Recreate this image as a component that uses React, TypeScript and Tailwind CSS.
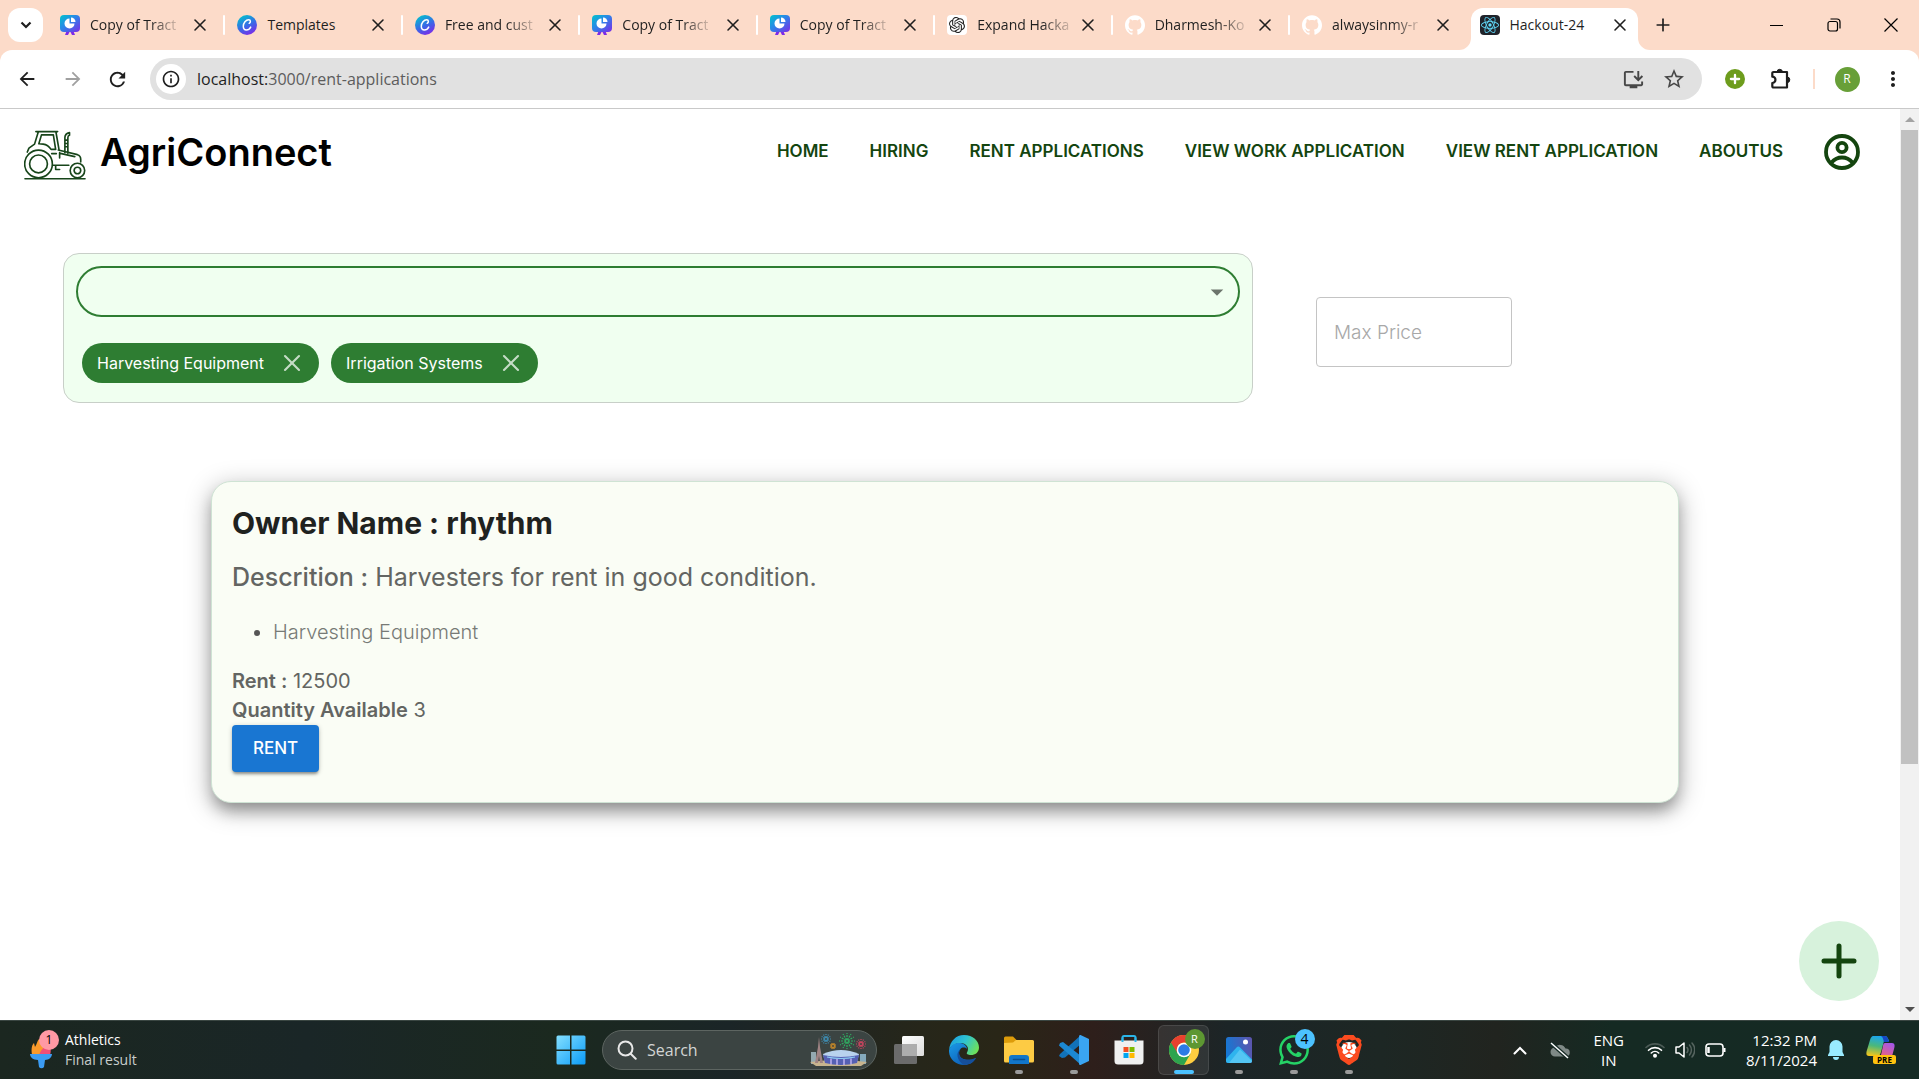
import type { ReactNode } from "react";
import { SiBrave, SiGithub, SiOpenai, SiReact, SiWhatsapp } from "react-icons/si";
import {
  MdArrowBack,
  MdArrowDropDown,
  MdArrowForward,
  MdInfoOutline,
  MdMoreVert,
  MdOutlineInstallDesktop,
  MdRefresh,
  MdStarOutline,
} from "react-icons/md";
import { Plus, X } from "lucide-react";

/* ---------- Favicons ---------- */

function PresentationIcon() {
  return (
    <svg viewBox="0 0 20 20" className="size-5">
      <defs>
        <linearGradient id="presentation" x1="0" y1="0" x2="1" y2="1">
          <stop offset="0" stopColor="#00c4cc" />
          <stop offset="0.45" stopColor="#2b86e8" />
          <stop offset="1" stopColor="#7d2ae8" />
        </linearGradient>
      </defs>
      <path d="M5 20l2-5h6l2 5h-3l-2-4-2 4z" fill="#7d2ae8" />
      <rect width="20" height="17" rx="4" fill="url(#presentation)" />
      <path d="M9.500 3.500a5 5 0 1 0 5 5h-5z" fill="#fff" />
      <path d="M11 2.500a4.500 4.500 0 0 1 4.500 4.500H11z" fill="#fff" />
    </svg>
  );
}

function CanvaIcon() {
  return (
    <svg viewBox="0 0 20 20" className="size-5">
      <defs>
        <linearGradient id="canva" x1="0.2" y1="0" x2="0.7" y2="1">
          <stop offset="0" stopColor="#00c4cc" />
          <stop offset="0.55" stopColor="#3969e7" />
          <stop offset="1" stopColor="#7d2ae8" />
        </linearGradient>
      </defs>
      <circle cx="10" cy="10" r="10" fill="url(#canva)" />
      <path
        d="M12.200 8.300c1.600-.8 1.700-3.600-.5-3.600C8.900 4.700 6.300 8 6.300 11.300c0 2.300 1.300 3.700 3.100 3.700 1.900 0 3.400-1.200 4.300-2.900"
        fill="none"
        stroke="#fff"
        strokeWidth="1.500"
        strokeLinecap="round"
      />
    </svg>
  );
}

function OpenAiIcon() {
  return (
    <span className="flex size-5 items-center justify-center rounded bg-white text-[#222]">
      <SiOpenai size={16} />
    </span>
  );
}

function GithubIcon() {
  return <SiGithub size={20} className="text-white" />;
}

function ReactIcon() {
  return (
    <span className="flex size-5 items-center justify-center rounded bg-[#20232a] text-[#61dafb]">
      <SiReact size={18} />
    </span>
  );
}

/* ---------- Browser chrome ---------- */

const tabs: { title: string; icon: ReactNode }[] = [
  { title: "Copy of Tract", icon: <PresentationIcon /> },
  { title: "Templates", icon: <CanvaIcon /> },
  { title: "Free and cust", icon: <CanvaIcon /> },
  { title: "Copy of Tract", icon: <PresentationIcon /> },
  { title: "Copy of Tract", icon: <PresentationIcon /> },
  { title: "Expand Hacka", icon: <OpenAiIcon /> },
  { title: "Dharmesh-Ko", icon: <GithubIcon /> },
  { title: "alwaysinmy-r", icon: <GithubIcon /> },
  { title: "Hackout-24", icon: <ReactIcon /> },
];

function Tab({ title, icon, active, last }: { title: string; icon: ReactNode; active: boolean; last: boolean }) {
  return (
    <div className="relative flex min-w-0 flex-1 items-stretch pt-2">
      {active && (
        <>
          <svg viewBox="0 0 12 12" className="absolute bottom-0 -left-3 size-3" fill="#fff">
            <path d="M12 0v12H0A12 12 0 0 0 12 0z" />
          </svg>
          <svg viewBox="0 0 12 12" className="absolute right-[-2px] bottom-0 size-3" fill="#fff">
            <path d="M0 0v12h12A12 12 0 0 1 0 0z" />
          </svg>
        </>
      )}
      <div
        className={
          active
            ? "mr-[10px] flex min-w-0 flex-1 items-center rounded-t-xl bg-white pr-2 pb-2 pl-[9px]"
            : "mr-[10px] flex min-w-0 flex-1 items-center pr-2 pb-2 pl-[9px]"
        }
      >
        <button type="button" className="flex min-w-0 flex-1 items-center gap-[10px] text-left">
          <span className="shrink-0">{icon}</span>
          <span
            className={
              active || title === "Templates"
                ? "text-sm whitespace-nowrap"
                : "text-sm whitespace-nowrap [mask-image:linear-gradient(to_right,black_70%,#0003)]"
            }
          >
            {title}
          </span>
        </button>
        <button type="button" aria-label={`Close ${title}`} className="shrink-0">
          <X size={20} strokeWidth={1.9} />
        </button>
      </div>
      {!active && !last && <span className="absolute top-[15px] right-[3px] h-5 w-0.5 rounded bg-white" />}
    </div>
  );
}

function TabStrip() {
  return (
    <div className="flex h-[50px] bg-[#fcdbc9]">
      <div className="w-[51px] pt-2 pl-2">
        <button
          type="button"
          aria-label="Search tabs"
          className="flex h-[34px] w-[35px] items-center justify-center rounded-xl bg-white"
        >
          <svg viewBox="0 0 12 8" className="h-2 w-3" fill="none" stroke="#1f1f1f" strokeWidth="2.200">
            <path d="M1.500 1.500L6 6l4.500-4.500" />
          </svg>
        </button>
      </div>
      <div className="flex min-w-0 flex-1">
        {tabs.map((tab, i) => (
          <Tab key={i} {...tab} active={i === tabs.length - 1} last={i === tabs.length - 2} />
        ))}
      </div>
      <div className="flex w-[271px] items-stretch justify-between">
        <button type="button" aria-label="New tab" className="flex w-[30px] items-center justify-center">
          <Plus size={20} strokeWidth={2} />
        </button>
        <div className="flex">
          <button type="button" aria-label="Minimize" className="flex w-[57px] items-center justify-center">
            <span className="h-px w-[13px] bg-black" />
          </button>
          <button type="button" aria-label="Restore" className="flex w-[57px] items-center justify-center">
            <svg viewBox="0 0 14 14" className="size-[14px]" fill="none" stroke="#000" strokeWidth="1.200">
              <rect x="1" y="3.500" width="9.500" height="9.500" rx="2" />
              <path d="M3.500 1h6.500a3 3 0 0 1 3 3v6.500" />
            </svg>
          </button>
          <button type="button" aria-label="Close window" className="flex w-[57px] items-center justify-center">
            <svg viewBox="0 0 14 14" className="size-[14px]" stroke="#000" strokeWidth="1.200">
              <path d="M.5.5l13 13M13.500.5l-13 13" />
            </svg>
          </button>
        </div>
      </div>
    </div>
  );
}

function Toolbar() {
  return (
    <div className="bg-[#fcdbc9]">
      <div className="flex h-[59px] items-center rounded-t-xl border-b border-[#c9c9c9] bg-white pr-[3px] pl-1 text-[#1f1f1f]">
        <button type="button" aria-label="Back" className="flex w-[46px] justify-center">
          <MdArrowBack size={22} />
        </button>
        <button type="button" aria-label="Forward" className="flex w-[45px] justify-center text-[#a0a0a0]">
          <MdArrowForward size={22} />
        </button>
        <button type="button" aria-label="Reload" className="flex w-[45px] justify-center">
          <MdRefresh size={23} />
        </button>
        <div className="mr-[10px] ml-[10px] flex h-[42px] flex-1 items-center rounded-full bg-[#e1e1e1] pr-4 pl-[6px]">
          <button
            type="button"
            aria-label="Site information"
            className="flex size-[30px] items-center justify-center rounded-full bg-white"
          >
            <MdInfoOutline size={20} />
          </button>
          <a href="#address" className="ml-[11px] flex-1 text-[16px] leading-5 text-[#5c5c5c]">
            <span className="text-[#1f1f1f]">localhost:</span>3000/rent-applications
          </a>
          <button type="button" aria-label="Install app" className="mr-[17px] text-[#474747]">
            <MdOutlineInstallDesktop size={23} />
          </button>
          <button type="button" aria-label="Bookmark this page" className="text-[#474747]">
            <MdStarOutline size={24} />
          </button>
        </div>
        <button type="button" aria-label="Add extension" className="flex w-[46px] justify-center">
          <span className="flex size-5 items-center justify-center rounded-full bg-[#6d9c1c] text-white">
            <Plus size={14} strokeWidth={4} />
          </span>
        </button>
        <button type="button" aria-label="Extensions" className="flex w-[46px] justify-center">
          <svg viewBox="0 0 22 22" className="size-[22px]">
            <path
              d="M3.500 4h13.500v15.500H3.500a1.200 1.200 0 0 1-1.200-1.200V15a3 3 0 0 0 0-6.300V5.200A1.200 1.200 0 0 1 3.500 4z"
              fill="none"
              stroke="#1f1f1f"
              strokeWidth="2.200"
              strokeLinejoin="round"
            />
            <path d="M7 4a2.700 2.700 0 0 1 5.400 0zM17 9a2.800 2.800 0 0 1 0 5.600z" fill="#1f1f1f" stroke="#1f1f1f" />
          </svg>
        </button>
        <span className="mx-[9px] h-5 w-0.5 bg-[#fcdbc9]" />
        <button type="button" aria-label="Profile" className="flex w-[46px] justify-center">
          <span className="flex size-[25px] items-center justify-center rounded-full bg-[#689f38] text-[12px] text-white">
            R
          </span>
        </button>
        <button type="button" aria-label="Menu" className="flex w-[46px] justify-center">
          <MdMoreVert size={24} />
        </button>
      </div>
    </div>
  );
}

/* ---------- AgriConnect page ---------- */

function TractorLogo() {
  return (
    <svg
      viewBox="24 24 188 150"
      className="mt-[5px] h-[50px] w-[62px]"
      fill="none"
      stroke="#17451a"
      strokeWidth="5"
      strokeLinecap="round"
      strokeLinejoin="round"
    >
      <path d="M60 28h66M67 30L56 66l-17 12-5 12M121 30l9 52M77 38h36l7 44h-14q-9-14-24-16l-13-1z" />
      <path d="M148 92V46q0-12 14-15v8q-5 1-5 8v47M148 54h9M148 64h9M148 74h9" />
      <path d="M108 95h14M128 84l58 14q10 3 10 14v8M134 94l44 10M132 92v16M112 130h48M120 131v12h12" />
      <circle cx="68" cy="126" r="42" />
      <circle cx="68" cy="126" r="27" />
      <circle cx="186" cy="146" r="22" />
      <circle cx="186" cy="146" r="10" />
      <path d="M27 171h182" />
    </svg>
  );
}

const navItems = ["HOME", "HIRING", "RENT APPLICATIONS", "VIEW WORK APPLICATION", "VIEW RENT APPLICATION", "ABOUTUS"];

function SiteHeader() {
  return (
    <header className="flex h-[86px] items-center justify-between pr-10 pl-6">
      <a href="#home" className="flex items-center gap-[14px]">
        <TractorLogo />
        <span className="text-[38px] leading-[50px] font-semibold text-black">AgriConnect</span>
      </a>
      <nav className="flex items-center gap-[41px] text-[17px] font-semibold text-[#14450f]">
        {navItems.map((item) => (
          <a key={item} href={`#${item.toLowerCase().replaceAll(" ", "-")}`}>
            {item}
          </a>
        ))}
        <button type="button" aria-label="Account">
          <svg viewBox="0 0 36 36" className="size-9" fill="none" stroke="currentColor" strokeWidth="3.800">
            <circle cx="18" cy="18" r="16" />
            <circle cx="18" cy="13.500" r="4.600" />
            <path d="M7.500 28.500c3-3.500 6.500-5 10.500-5s7.500 1.500 10.500 5" />
          </svg>
        </button>
      </nav>
    </header>
  );
}

function FilterChip({ label }: { label: string }) {
  return (
    <li className="flex h-10 items-center rounded-full bg-[#2e7d32] pr-[13px] pl-[15px] text-base text-white">
      {label}
      <button type="button" aria-label={`Remove ${label}`} className="ml-[14px] text-[#c5dcc6]">
        <X size={28} strokeWidth={1.8} />
      </button>
    </li>
  );
}

function Filters() {
  return (
    <section className="mt-[58px] grid grid-cols-[1190fr_521fr] items-center gap-[63px] px-[63px]">
      <div className="rounded-2xl border border-[#c8cfc8] bg-[#f0fff0] px-3 pt-3 pb-[19px]">
        <div className="relative flex items-center">
          <select
            aria-label="Equipment type"
            className="h-[51px] w-full appearance-none rounded-full border-2 border-[#2e7d32] bg-transparent"
          />
          <MdArrowDropDown size={30} className="pointer-events-none absolute right-2 text-[#6c756c]" />
        </div>
        <ul className="mt-[26px] flex gap-3 pl-[6px]">
          <FilterChip label="Harvesting Equipment" />
          <FilterChip label="Irrigation Systems" />
        </ul>
      </div>
      <input
        type="text"
        aria-label="Max Price"
        placeholder="Max Price"
        className="mt-2 h-[70px] w-[196px] rounded border border-[#c4c4c4] px-[17px] text-[19px] font-light placeholder:text-[#a8a8a8]"
      />
    </section>
  );
}

function RentCard() {
  return (
    <article className="mt-[78px] mr-[221px] ml-[211px] rounded-[20px] border border-[#cfe3d4] bg-[#fafdf5] px-5 pt-5 pb-[30px] text-xl leading-[29px] text-[#636562] shadow-[0_10px_15px_-3px_rgba(0,0,0,0.3),0_6px_24px_2px_rgba(0,0,0,0.25)]">
      <h2 className="text-[30px] leading-[42px] font-bold text-[#1f221f]">Owner Name : rhythm</h2>
      <p className="mt-[15px] text-[25px] leading-9">
        <b className="font-medium">Descrition :</b> Harvesters for rent in good condition.
      </p>
      <ul className="mt-[22px] list-disc pl-[41px] leading-[30px] font-light text-[#777a76] marker:text-[#555]">
        <li>Harvesting Equipment</li>
      </ul>
      <p className="mt-5">
        <b className="font-semibold">Rent :</b> 12500
      </p>
      <p>
        <b className="font-semibold">Quantity Available</b> 3
      </p>
      <button
        type="button"
        className="block h-[47px] rounded bg-[#1976d2] px-[21px] text-[17px] font-medium text-white shadow-[0_3px_3px_-1px_rgba(0,0,0,0.35),0_1px_5px_rgba(0,0,0,0.2)]"
      >
        RENT
      </button>
    </article>
  );
}

function PageScrollbar() {
  return (
    <div aria-hidden="true" className="flex w-[19px] flex-col bg-[#f1f1f1]">
      <span className="flex h-[21px] items-center justify-center">
        <span className="border-x-[5px] border-b-[5px] border-x-transparent border-b-[#a3a3a3]" />
      </span>
      <span className="flex flex-1 flex-col px-px">
        <span className="h-[73%] bg-[#c1c1c1]" />
      </span>
      <span className="flex h-[21px] items-center justify-center">
        <span className="border-x-[5px] border-t-[5px] border-x-transparent border-t-[#505050]" />
      </span>
    </div>
  );
}

/* ---------- Taskbar ---------- */

function WindowsIcon() {
  return (
    <svg viewBox="0 0 30 30" className="size-[30px]">
      <defs>
        <linearGradient id="windows" x1="0" y1="0" x2="1" y2="1">
          <stop offset="0" stopColor="#84dfff" />
          <stop offset="1" stopColor="#0a9bf8" />
        </linearGradient>
      </defs>
      <path
        d="M2 .5h12v14H.5V2A1.500 1.500 0 0 1 2 .5zM15.500.5H28A1.500 1.500 0 0 1 29.500 2v12.500h-14zM.5 16H14v13.500H2A1.500 1.500 0 0 1 .5 28zM15.500 16h14v12a1.500 1.500 0 0 1-1.500 1.500H15.500z"
        fill="url(#windows)"
      />
    </svg>
  );
}

function Firework({ x, y, r, color }: { x: number; y: number; r: number; color: string }) {
  const rays = [0, 30, 60, 90, 120, 150, 180, 210, 240, 270, 300, 330];
  return (
    <g stroke={color} strokeWidth="1.200" strokeDasharray="2 1">
      {rays.map((a) => (
        <path key={a} d={`M${x} ${y - 1}V${y - r}`} transform={`rotate(${a} ${x} ${y})`} />
      ))}
    </g>
  );
}

function StadiumIcon() {
  return (
    <svg viewBox="0 0 58 34" className="h-[34px] w-[58px]">
      <Firework x={16} y={6} r={5} color="#3f8fb5" />
      <Firework x={37} y={8} r={8} color="#2fae62" />
      <Firework x={23} y={13} r={4} color="#c98a28" />
      <Firework x={51} y={11} r={5} color="#cf4560" />
      <path d="M1 19h5v12H1z" fill="#93a9b0" />
      <path d="M50 21h6v10h-6z" fill="#84aabd" />
      <path d="M0 29q29-4 57 0l-6 4H6z" fill="#c8b48e" />
      <path d="M13 21q18-8 36 0l-2 8q-16 4-32 0z" fill="#b9d3ee" />
      <path d="M13 22q18 4 36 0l-2 8q-16 4-32 0z" fill="#5660b4" />
      <path d="M17 24q14 3 28 0" fill="none" stroke="#8fd0f5" strokeWidth="1.200" />
      <path d="M21 25.500v6M27 26v6M34 26v6M41 25.500v6" stroke="#cbbdf7" strokeWidth="1.300" />
      <path d="M9 4l-1 10-3 16h3l1-7 1 7h3l-3-16z" fill="#a08484" />
    </svg>
  );
}

function TaskViewIcon() {
  return (
    <svg viewBox="0 0 30 28" className="h-7 w-[30px]">
      <defs>
        <linearGradient id="taskview" x1="0" y1="0" x2="1" y2="1">
          <stop offset="0" stopColor="#fff" />
          <stop offset="1" stopColor="#dcdcdc" />
        </linearGradient>
      </defs>
      <rect x="8" width="22" height="20" rx="1.500" fill="url(#taskview)" />
      <rect y="8" width="23" height="20" rx="1.500" fill="#6b6b6b" />
      <path d="M8 8h15v12H8z" fill="#adadad" />
    </svg>
  );
}

function EdgeIcon() {
  return (
    <svg viewBox="0 0 30 30" className="size-[30px]">
      <defs>
        <linearGradient id="edgeTop" x1="0" y1="0.2" x2="1" y2="0.6">
          <stop offset="0" stopColor="#1b9de2" />
          <stop offset="0.5" stopColor="#2fc4d0" />
          <stop offset="1" stopColor="#6fe05a" />
        </linearGradient>
        <linearGradient id="edgeBody" x1="0" y1="0" x2="0.8" y2="1">
          <stop offset="0" stopColor="#1a9be8" />
          <stop offset="1" stopColor="#0c56b0" />
        </linearGradient>
      </defs>
      <path d="M0 15C1 6 7 0 15 0c9 0 15 6 15 12.500 0 5-4 7.500-8 7.500-3 0-5-1-4-2.500 3-5-1-9.500-6.500-9.500C6 8 2 11 0 15z" fill="url(#edgeTop)" />
      <path d="M0 15c2-5 6-7.500 11-7 4 .5 7 3 7 6-3-3-8-1-8 4 0 6 8 9 17 5-3 5-7 7-12 7C6.500 30-.5 23.500 0 15z" fill="url(#edgeBody)" />
      <path d="M12 14c-5 5 0 15 15 9-3 5-8 7-12 7C8 26 6 17 12 14z" fill="#154f9c" />
    </svg>
  );
}

function FolderIcon() {
  return (
    <svg viewBox="0 0 30 28" className="h-7 w-[30px]">
      <path d="M0 2a1.500 1.500 0 0 1 1.500-1.500H9l4 4h15.500A1.500 1.500 0 0 1 30 6v8H0z" fill="#dd9c0a" />
      <path d="M0 7l9-.500 3-2.500h16.500A1.500 1.500 0 0 1 30 5.500V25a1.500 1.500 0 0 1-1.500 1.500h-27A1.500 1.500 0 0 1 0 25z" fill="#fdcb44" />
      <path d="M5 28v-6a3 3 0 0 1 3-3h14a3 3 0 0 1 3 3v6z" fill="#1276c9" />
      <path d="M9.500 23.500h11" stroke="#0b4f91" strokeWidth="1.600" strokeLinecap="round" />
    </svg>
  );
}

function VsCodeIcon() {
  return (
    <svg viewBox="0 0 30 30" className="size-[30px]">
      <path d="M22 0L1 19l-1 2 3 2 3-.5L22 9z" fill="#1272b9" />
      <path d="M22 30L0 10.500 1 8l3-1 18 14z" fill="#1c88d2" />
      <path d="M21.500 0L30 4v22l-8.500 4c-1 0-1.500-.5-1.500-1.500v-27C20 .5 20.500 0 21.500 0z" fill="#3aa5f2" />
    </svg>
  );
}

function StoreIcon() {
  return (
    <svg viewBox="0 0 30 30" className="size-[30px]">
      <path d="M8.500 8V2.500A1.500 1.500 0 0 1 10 1h10a1.500 1.500 0 0 1 1.500 1.500V8" fill="none" stroke="#2bb5e9" strokeWidth="2" />
      <path d="M.5 5.500h29V26a3.500 3.500 0 0 1-3.500 3.500H4A3.500 3.500 0 0 1 .5 26z" fill="#f0f0f0" />
      <path d="M8.500 2.500V7M21.500 2.500V7" stroke="#2bb5e9" strokeWidth="2" />
      <path d="M9.500 12h5v5h-5z" fill="#f25022" />
      <path d="M15.500 12h5v5h-5z" fill="#7fba00" />
      <path d="M9.500 18h5v5h-5z" fill="#00a4ef" />
      <path d="M15.500 18h5v5h-5z" fill="#ffb900" />
    </svg>
  );
}

function ChromeIcon() {
  return (
    <svg viewBox="0 0 30 30" className="size-[30px]">
      <circle cx="15" cy="15" r="15" fill="#ffcd40" />
      <path d="M2 7.500A15 15 0 0 0 15 30l6.500-11.300L15 15z" fill="#2da44e" />
      <path d="M2 7.500A15 15 0 0 1 28 7.500H15a7.500 7.500 0 0 0-6.600 10.500z" fill="#e8402f" />
      <circle cx="15" cy="15" r="7.300" fill="#fff" />
      <circle cx="15" cy="15" r="5.800" fill="#2c7be5" />
    </svg>
  );
}

function PhotosIcon() {
  return (
    <svg viewBox="0 0 26 26" className="size-[26px]">
      <defs>
        <linearGradient id="photos" x1="0" y1="0.5" x2="1" y2="0.3">
          <stop offset="0" stopColor="#1578d4" />
          <stop offset="1" stopColor="#5b55ae" />
        </linearGradient>
      </defs>
      <rect width="26" height="26" rx="2.500" fill="url(#photos)" />
      <path d="M0 22L10.500 10.500a2.500 2.500 0 0 1 3.600 0L26 22.500V24a2 2 0 0 1-2 2H2a2 2 0 0 1-2-2z" fill="#2fb4ee" />
      <path d="M3 26l11-13.500L26 24a2 2 0 0 1-2 2z" fill="#82dcfb" opacity="0.450" />
      <circle cx="19.500" cy="5" r="2.500" fill="#fff" />
    </svg>
  );
}

function BraveIcon() {
  return (
    <span className="relative flex items-center justify-center">
      <span className="absolute size-4 rounded-full bg-white" />
      <SiBrave size={30} className="relative text-[#fb4b1f]" />
    </span>
  );
}

function TaskButton({
  label,
  state,
  children,
}: {
  label: string;
  state?: "running" | "active";
  children: ReactNode;
}) {
  return (
    <button type="button" aria-label={label} className="relative flex h-full w-[55px] items-center justify-center">
      {state === "active" && (
        <span className="absolute inset-x-0.5 inset-y-1 rounded-md border border-white/10 bg-white/8" />
      )}
      <span className="relative">{children}</span>
      {state === "running" && <span className="absolute bottom-[5px] h-1 w-2 rounded-full bg-[#9a9a9a]" />}
      {state === "active" && <span className="absolute bottom-[5px] h-1 w-5 rounded-full bg-[#4cc2ff]" />}
    </button>
  );
}

function Taskbar() {
  return (
    <footer className="flex h-[59px] items-center border-t border-[#3a4642] bg-[linear-gradient(90deg,#1b2720_0%,#1a2627_16%,#1b291f_29%,#1b2527_38%,#26261a_48%,#292617_52%,#2e1f1b_57%,#1c2527_64%,#1d2724_72%,#21241f_78%,#152a23_84%,#152a24_100%)] text-white">
      <div className="flex flex-1 items-center pl-[23px]">
        <button type="button" className="flex items-center gap-[6px] pl-[6px] text-left text-sm leading-5">
          <span className="relative">
            <svg viewBox="0 0 30 38" className="h-[38px] w-[30px]">
              <path d="M3 24c-1-7 0-10 2-12l1 4C8 13 8 10 10 8c7 3 12 9 11 16z" fill="#f99a2b" />
              <path d="M10 24c2-6 6-9 11-11 1 4 1 8 0 11z" fill="#f04f78" />
              <path d="M1 23h22c0 3-3 6-7 6l-1 7a3 3 0 0 1-5 0l-1-7c-5 0-8-3-8-6z" fill="#3b9cf3" />
            </svg>
            <span className="absolute -top-[1px] right-0 flex size-5 items-center justify-center rounded-full bg-[#ff99a4] text-xs text-black">
              1
            </span>
          </span>
          <span>
            Athletics
            <br />
            <span className="text-[#c8cdcb]">Final result</span>
          </span>
        </button>
      </div>

      <div className="flex h-full items-center">
        <TaskButton label="Start">
          <WindowsIcon />
        </TaskButton>
        <label className="mx-1 flex h-10 w-[275px] items-center rounded-full border border-[#5d6561] bg-[#3b4442] pr-2 pl-[14px]">
          <svg viewBox="0 0 20 20" className="size-5" fill="none" stroke="#e8e8e8" strokeWidth="2" strokeLinecap="round">
            <circle cx="8.500" cy="8.500" r="7" />
            <path d="M13.700 13.700l5 5" />
          </svg>
          <input
            type="text"
            aria-label="Search"
            placeholder="Search"
            className="ml-[10px] min-w-0 flex-1 bg-transparent text-base placeholder:text-[#d2d5d4]"
          />
          <StadiumIcon />
        </label>
        <TaskButton label="Task view">
          <TaskViewIcon />
        </TaskButton>
        <TaskButton label="Edge">
          <EdgeIcon />
        </TaskButton>
        <TaskButton label="File Explorer" state="running">
          <FolderIcon />
        </TaskButton>
        <TaskButton label="Visual Studio Code" state="running">
          <VsCodeIcon />
        </TaskButton>
        <TaskButton label="Microsoft Store">
          <StoreIcon />
        </TaskButton>
        <TaskButton label="Chrome" state="active">
          <ChromeIcon />
          <span className="absolute -top-[6px] -right-[6px] flex size-5 items-center justify-center rounded-full bg-[#5d9732] text-[11px]">
            R
          </span>
        </TaskButton>
        <TaskButton label="Photos" state="running">
          <PhotosIcon />
        </TaskButton>
        <TaskButton label="WhatsApp" state="running">
          <SiWhatsapp size={30} className="text-[#25d366]" />
          <span className="absolute -top-[6px] -right-[6px] flex size-5 items-center justify-center rounded-full bg-[#4cc2ff] text-sm text-black">
            4
          </span>
        </TaskButton>
        <TaskButton label="Brave" state="running">
          <BraveIcon />
        </TaskButton>
      </div>

      <div className="flex flex-1 items-center justify-end pr-[23px] leading-5">
        <button type="button" aria-label="Show hidden icons">
          <svg viewBox="0 0 14 9" className="h-[9px] w-[14px]" fill="none" stroke="#fff" strokeWidth="2" strokeLinecap="round">
            <path d="M1.500 7.500L7 2l5.500 5.500" />
          </svg>
        </button>
        <button type="button" aria-label="OneDrive" className="ml-[23px]">
          <svg viewBox="0 0 20 17" className="h-[17px] w-5">
            <path d="M5 14.500a4.500 4.500 0 0 1 0-9 6 6 0 0 1 10.500 1 4 4 0 0 1 .5 8z" fill="#7f8986" />
            <path d="M1 1l17 15" stroke="#152a24" strokeWidth="4" />
            <path d="M1 1l17 15" stroke="#fff" strokeWidth="1.500" />
          </svg>
        </button>
        <button type="button" className="ml-[23px] text-[15px] leading-5">
          ENG
          <br />
          IN
        </button>
        <button type="button" aria-label="Network, volume and battery" className="ml-[21px] flex items-center gap-[10px]">
          <svg viewBox="0 0 20 16" className="h-4 w-5" fill="none" stroke="#fff" strokeWidth="1.600" strokeLinecap="round">
            <path d="M1 5.500a13 13 0 0 1 18 0" stroke="#4c5b56" />
            <path d="M3.500 8.300a9.300 9.300 0 0 1 13 0M6.300 11a5.400 5.400 0 0 1 7.400 0" />
            <circle cx="10" cy="13.700" r="1.200" fill="#fff" />
          </svg>
          <svg viewBox="0 0 20 18" className="h-[18px] w-5" fill="none" stroke="#fff" strokeWidth="1.500" strokeLinecap="round" strokeLinejoin="round">
            <path d="M1 6v6h3l5 4V2L4 6z" />
            <path d="M12 6.500a4 4 0 0 1 0 5M14.500 4a7.500 7.500 0 0 1 0 10M17 2a10.500 10.500 0 0 1 0 14" stroke="#56645f" />
          </svg>
          <svg viewBox="0 0 21 14" className="h-[14px] w-[21px]" fill="none" stroke="#fff" strokeWidth="1.600">
            <rect x="1" y="1" width="17" height="12" rx="3" />
            <path d="M19.500 5v4" strokeWidth="2" />
            <path d="M3.500 4v6" strokeWidth="2.500" />
          </svg>
        </button>
        <button type="button" className="ml-[20px] text-right text-[15px] leading-5">
          12:32 PM
          <br />
          8/11/2024
        </button>
        <button type="button" aria-label="Notifications" className="ml-[11px]">
          <svg viewBox="0 0 16 20" className="h-5 w-4" fill="#99ebff">
            <path d="M8 0a6.500 6.500 0 0 1 6.500 6.500V12L16 15v1H0v-1l1.500-3V6.500A6.500 6.500 0 0 1 8 0zM5 17h6a3 3 0 0 1-6 0z" />
          </svg>
        </button>
        <button type="button" aria-label="Copilot" className="relative ml-[22px]">
          <svg viewBox="0 0 30 28" className="h-7 w-[30px]">
            <defs>
              <linearGradient id="copilotLeft" x1="0.500" y1="0" x2="0.300" y2="1">
                <stop offset="0" stopColor="#1aa5f0" />
                <stop offset="0.500" stopColor="#4bb87a" />
                <stop offset="1" stopColor="#f3c61c" />
              </linearGradient>
              <linearGradient id="copilotRight" x1="0.800" y1="0" x2="0.300" y2="1">
                <stop offset="0" stopColor="#a457ea" />
                <stop offset="1" stopColor="#f8656b" />
              </linearGradient>
            </defs>
            <path d="M7 0h12c2 0 3 2 4 5h-5l-3 11c-1 3-2 4-4 4H3c-3 0-3-3-2-6L4 4c1-3 2-4 3-4z" fill="url(#copilotLeft)" />
            <path d="M15 0h4c2 0 3 2 4 6h-5c-1-3-1-5-3-6z" fill="#1647c4" />
            <path d="M19 7h7c3 0 3 3 2 6l-3 11h-14c3-1 3-3 4-5l2-9c0-2 1-3 2-3z" fill="url(#copilotRight)" />
          </svg>
          <span className="absolute right-0 bottom-0 flex h-[9px] w-[23px] items-center justify-center rounded-xs bg-[#ffc20e] text-[8px] font-bold text-black">
            PRE
          </span>
        </button>
      </div>
    </footer>
  );
}

export default function App() {
  return (
    <div className="flex h-screen flex-col overflow-hidden bg-white font-['Open_Sans','Noto_Sans',sans-serif] text-[#1f1f1f]">
      <TabStrip />
      <Toolbar />
      <div className="flex min-h-0 flex-1">
        <main className="relative min-w-0 flex-1 overflow-hidden font-['Inter','Lato',sans-serif]">
          <SiteHeader />
          <Filters />
          <RentCard />
          <button
            type="button"
            aria-label="Add application"
            className="absolute right-[21px] bottom-[19px] flex size-20 items-center justify-center rounded-full bg-[#d7f2dc] text-[#14450f]"
          >
            <svg viewBox="0 0 36 36" className="size-9" stroke="currentColor" strokeWidth="5" strokeLinecap="round">
              <path d="M18 3v30M3 18h30" />
            </svg>
          </button>
        </main>
        <PageScrollbar />
      </div>
      <Taskbar />
    </div>
  );
}
